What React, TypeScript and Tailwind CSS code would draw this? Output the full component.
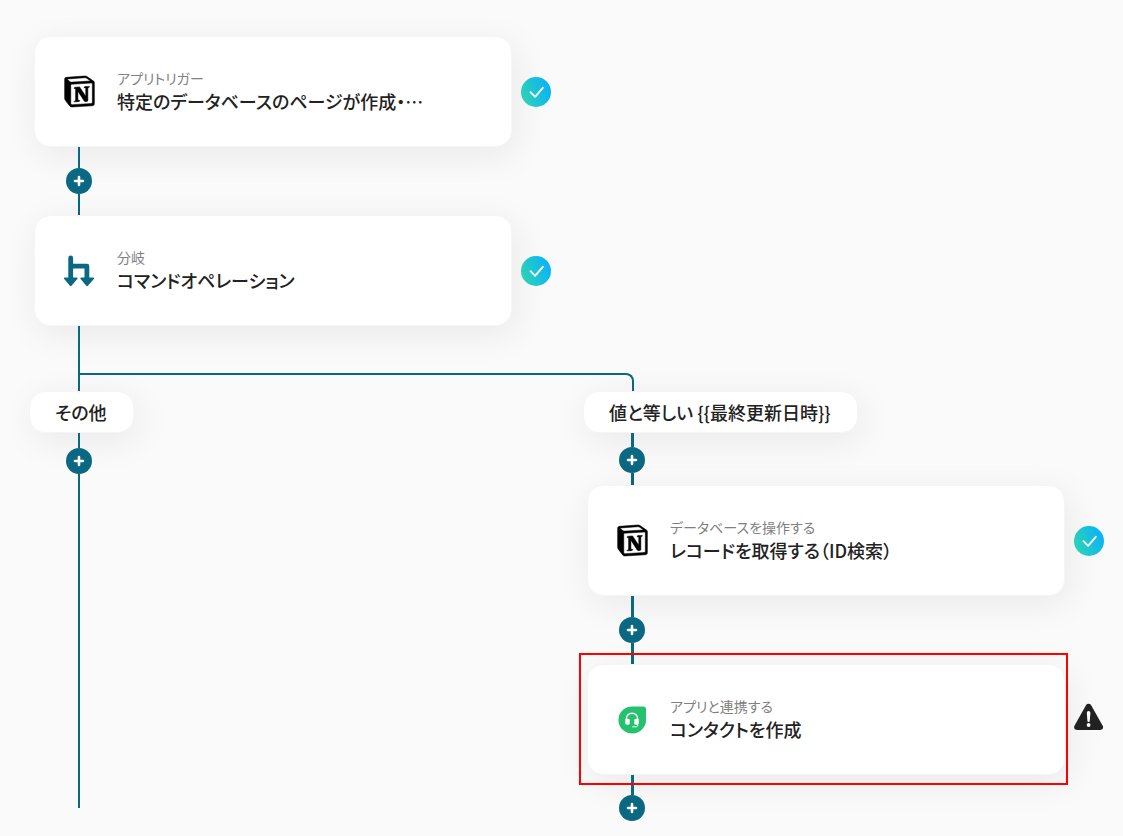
import React from 'react';
import { SiNotion } from 'react-icons/si';

type Status = 'done' | 'warning';

function NotionIcon() {
  return <SiNotion className="size-[31px] shrink-0 text-black overflow-visible" stroke="currentColor" strokeWidth={0.4} aria-hidden="true" />;
}

function BranchIcon() {
  return (
    <svg viewBox="0 0 30 32" className="w-[30px] h-8" fill="none" aria-hidden="true">
      <path d="M6.7 3v22M6.7 11.2h16.2V25" stroke="#0a6882" strokeWidth="4.8" strokeLinecap="round" strokeLinejoin="round" />
      <path
        d="M1 22.6h11.6a.9.9 0 0 1 .7 1.5l-5.6 6.4a1.3 1.3 0 0 1-2 0L.2 24.1a.9.9 0 0 1 .8-1.5ZM17.3 22.6h11.8a.9.9 0 0 1 .7 1.5l-5.7 6.4a1.3 1.3 0 0 1-2 0l-5.5-6.4a.9.9 0 0 1 .7-1.5Z"
        fill="#0a6882"
      />
    </svg>
  );
}

function FreshdeskIcon() {
  return (
    <svg viewBox="0 0 28 28" className="size-7" fill="none" aria-hidden="true">
      <path d="M14 .5h11.3A2.7 2.7 0 0 1 28 3.2V14A13.8 13.5 0 1 1 14 .5Z" fill="#25c16f" />
      <path d="M8.3 14.5v-1.600a5.7 5.7 0 0 1 11.4 0v1.600" stroke="#fff" strokeWidth="1.4" />
      <rect x="7.3" y="12.7" width="4.4" height="6" rx="1.4" fill="#fff" />
      <rect x="16.3" y="12.7" width="4.4" height="6" rx="1.4" fill="#fff" />
      <path d="M19.7 18.5v.8c0 1-.7 1.5-1.600 1.5h-3.4" stroke="#fff" strokeLinecap="round" />
    </svg>
  );
}

function StatusIcon({ status }: { status: Status }) {
  if (status === 'warning') {
    return (
      <svg viewBox="0 3 30 30" className="size-[30px] shrink-0 overflow-visible" role="img" aria-label="警告">
        <path d="M12.1 3.1a2.9 2.9 0 0 1 4.9 0l11.7 20.7c1.1 2-.2 4.2-2.5 4.2H3c-2.3 0-3.600-2.2-2.5-4.2Z" fill="#222" />
        <path d="M12.8 10.8a1.8 1.8 0 0 1 3.600 0l-.6 7.9a1.2 1.2 0 0 1-2.4 0Z" fill="#fff" />
        <circle cx="14.6" cy="23" r="1.9" fill="#fff" />
      </svg>
    );
  }
  return (
    <span
      role="img"
      aria-label="設定済み"
      className="size-[30px] shrink-0 rounded-full bg-[linear-gradient(70deg,#33dcb2,#05adff)] flex items-center justify-center"
    >
      <svg viewBox="0 0 30 30" className="size-full" fill="none">
        <path d="m9.5 15.2 4.6 4.6 7.7-9" stroke="#fff" strokeWidth="1.9" strokeLinecap="round" strokeLinejoin="round" />
      </svg>
    </span>
  );
}

function AddButton() {
  return (
    <button
      type="button"
      aria-label="ステップを追加"
      className="size-[26px] shrink-0 rounded-full bg-[#0a6882] flex items-center justify-center cursor-pointer"
    >
      <svg viewBox="0 0 12 12" className="size-3" fill="none">
        <path d="M6 2v8M2 6h8" stroke="#fff" strokeWidth="2.6" strokeLinecap="round" />
      </svg>
    </button>
  );
}

function Connector({ children, className = 'h-[68px]' }: { children: React.ReactNode; className?: string }) {
  return <div className={`relative w-[90px] flex flex-col items-center ${className}`}>{children}</div>;
}

function Line({ className }: { className: string }) {
  return <div className={`bg-[#0a6882] ${className}`} />;
}

interface StepCardProps {
  icon: React.ReactNode;
  kind: string;
  title: string;
  status: Status;
  selected?: boolean;
}

function StepCard({ icon, kind, title, status, selected }: StepCardProps) {
  return (
    <div className="flex items-center gap-[9px]">
      <div className="relative w-[478px] shrink-0">
        <div className="h-[111px] rounded-2xl border border-[#f5f5f5] bg-white shadow-[4px_8px_36px_rgba(0,0,0,0.07)] flex items-center gap-[23px] px-[29px]">
          <div className="w-[30px] shrink-0 flex justify-center">{icon}</div>
          <div className="min-w-0 pb-[2px]">
            <p className="text-[14px] leading-5 text-[#808080]">{kind}</p>
            <p className="text-[18px] leading-[26px] font-medium text-[#222] whitespace-nowrap">{title}</p>
          </div>
        </div>
        {selected && <div className="absolute -top-[11px] -bottom-[10px] -left-2 -right-[3px] z-10 border-2 border-[#f00]" />}
      </div>
      <StatusIcon status={status} />
    </div>
  );
}

function BranchLabel({ children }: { children: React.ReactNode }) {
  return (
    <div className="w-fit h-[42px] pl-[25px] pr-[26px] rounded-2xl border border-[#f5f5f5] bg-white shadow-[4px_8px_36px_rgba(0,0,0,0.07)] flex items-center text-[18px] font-medium text-[#222] whitespace-nowrap">
      {children}
    </div>
  );
}

export default function App() {
  return (
    <main
      lang="ja"
      className="min-h-screen min-w-[1123px] bg-[#fafafa] pt-9 pb-[15px] pl-[29px] font-['Noto_Sans_CJK_JP',sans-serif] [font-feature-settings:'palt']"
    >
      <div className="pl-[5px]">
        <StepCard icon={<NotionIcon />} kind="アプリトリガー" title="特定のデータベースのページが作成・…" status="done" />
        <Connector>
          <Line className="w-[2px] flex-1" />
          <AddButton />
          <Line className="w-[2px] flex-1" />
        </Connector>
        <StepCard icon={<BranchIcon />} kind="分岐" title="コマンドオペレーション" status="done" />
        <Connector className="h-[47px]">
          <Line className="w-[2px] flex-1" />
        </Connector>
      </div>

      <div className="relative h-[18px] ml-[49px] mr-[489px] border-2 border-b-0 border-[#0a6882] rounded-tr-lg" />

      <div className="grid grid-cols-[minmax(0,1fr)_540px]">
        <section className="flex flex-col">
          <BranchLabel>その他</BranchLabel>
          <div className="flex-1 flex pl-[5px] pb-[13px]">
            <Connector className="self-stretch">
              <Line className="w-[2px] h-[15px]" />
              <AddButton />
              <Line className="w-[2px] flex-1" />
            </Connector>
          </div>
        </section>

        <section>
          <BranchLabel>値と等しい {'{{最終更新日時}}'}</BranchLabel>
          <div className="pl-1">
            <Connector className="h-[52px]">
              <Line className="w-[3px] h-[14px]" />
              <AddButton />
              <Line className="w-[3px] flex-1" />
            </Connector>
            <StepCard icon={<NotionIcon />} kind="データベースを操作する" title="レコードを取得する（ID検索）" status="done" />
            <Connector>
              <Line className="w-[3px] flex-1" />
              <AddButton />
              <Line className="w-[3px] flex-1" />
            </Connector>
            <StepCard icon={<FreshdeskIcon />} kind="アプリと連携する" title="コンタクトを作成" status="warning" selected />
            <Connector className="h-[46px]">
              <Line className="w-[3px] flex-1" />
              <AddButton />
            </Connector>
          </div>
        </section>
      </div>
    </main>
  );
}
